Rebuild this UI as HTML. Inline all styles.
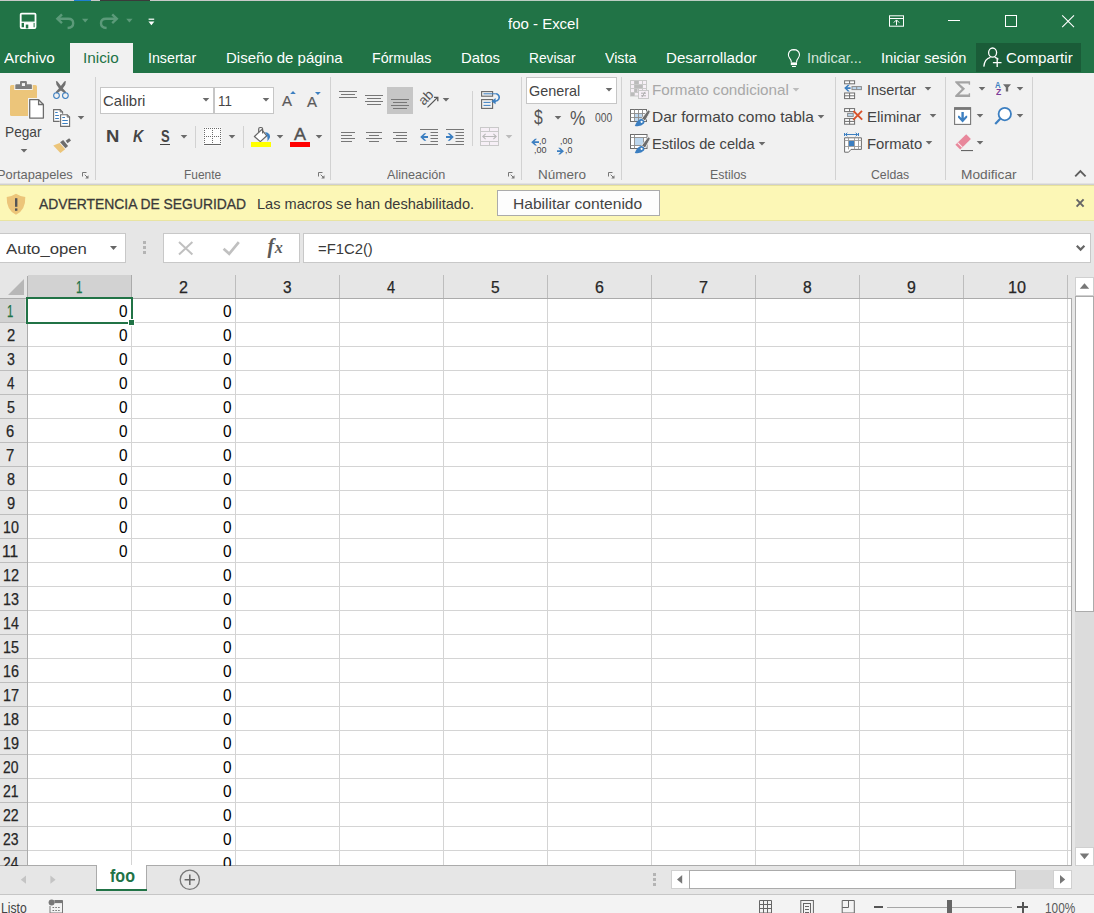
<!DOCTYPE html>
<html lang="es"><head><meta charset="utf-8"><title>foo - Excel</title>
<style>
html,body{margin:0;padding:0}
body{width:1094px;height:913px;position:relative;overflow:hidden;background:#e6e6e6;font-family:"Liberation Sans", sans-serif;}
body>div,body>svg,body>span{position:absolute;display:block}
.t{white-space:pre;line-height:1;transform-origin:0 0;}
</style></head><body>
<div style="left:0px;top:0px;width:1094px;height:1px;background:#bccdc3;"></div>
<div style="left:0px;top:0px;width:300px;height:1px;background:#c9c9c9;"></div>
<div style="left:74px;top:0px;width:17px;height:1px;background:#1e7fd1;"></div>
<div style="left:100px;top:0px;width:50px;height:1px;background:#3a3a3a;"></div>
<div style="left:0px;top:1px;width:1094px;height:72px;background:#217346;"></div>
<div style="left:0px;top:73px;width:1094px;height:110px;background:#f1f1f1;"></div>
<div style="left:0px;top:183px;width:1094px;height:1px;background:#e2e2e2;"></div>
<div style="left:0px;top:184px;width:1094px;height:1px;background:#d0d0d0;"></div>
<div style="left:0px;top:185px;width:1094px;height:36px;background:#fcf7b6;"></div>
<div style="left:0px;top:185px;width:1094px;height:1px;background:#e6e19c;"></div>
<div style="left:0px;top:220px;width:1094px;height:1px;background:#e9e4a2;"></div>
<div style="left:0px;top:221px;width:1094px;height:54px;background:#e6e6e6;"></div>
<span class="t" style="left:508.42px;top:16.30px;font-size:15px;color:#fff;transform:scaleX(0.9986);">foo - Excel</span>
<div style="left:70px;top:43px;width:63px;height:30px;background:#f1f1f1;"></div>
<span class="t" style="left:3.60px;top:50.30px;font-size:15px;color:#fff;transform:scaleX(1.0160);">Archivo</span>
<span class="t" style="left:82.73px;top:50.30px;font-size:15px;color:#217346;transform:scaleX(1.0193);">Inicio</span>
<span class="t" style="left:147.82px;top:50.30px;font-size:15px;color:#fff;transform:scaleX(0.9481);">Insertar</span>
<span class="t" style="left:225.87px;top:50.30px;font-size:15px;color:#fff;transform:scaleX(0.9986);">Diseño de página</span>
<span class="t" style="left:371.93px;top:50.30px;font-size:15px;color:#fff;transform:scaleX(0.9497);">Fórmulas</span>
<span class="t" style="left:461.48px;top:50.30px;font-size:15px;color:#fff;transform:scaleX(0.9913);">Datos</span>
<span class="t" style="left:528.97px;top:50.30px;font-size:15px;color:#fff;transform:scaleX(0.9156);">Revisar</span>
<span class="t" style="left:604.74px;top:50.30px;font-size:15px;color:#fff;transform:scaleX(0.9469);">Vista</span>
<span class="t" style="left:666.26px;top:50.30px;font-size:15px;color:#fff;transform:scaleX(1.0095);">Desarrollador</span>
<span class="t" style="left:806.80px;top:50.30px;font-size:15px;color:#d3e5da;transform:scaleX(0.9668);">Indicar...</span>
<span class="t" style="left:880.78px;top:50.30px;font-size:15px;color:#fff;transform:scaleX(0.9762);">Iniciar sesión</span>
<div style="left:976px;top:43px;width:105px;height:29px;background:#1a5c38;"></div>
<span class="t" style="left:1006.33px;top:50.30px;font-size:15px;color:#fff;transform:scaleX(1.0134);">Compartir</span>
<svg style="left:8px;top:79px" width="40" height="42" viewBox="8 79 40 42"><rect x="10" y="85" width="27" height="31" rx="1.5" fill="#ecc57a"/><path d="M14.3 90.1V84.2H19.4V80.3H27.5V84.2H32.7V90.1Z" fill="#f4f4f4"/><path d="M15.3 88.9V85.2Q15.3 84.2 16.3 84.2H20V82Q20 81 21 81H25.9Q26.9 81 26.9 82V84.2H30.9Q31.9 84.2 31.9 85.2V88.9Z" fill="#7d7d7d"/><rect x="21.9" y="83.1" width="3.1" height="2.9" fill="#f4f4f4"/><path d="M28 98H39.2L45.1 103.9V119.8H28Z" fill="#f4f4f4"/><path d="M29.7 99.7H38.6L43.4 104.5V118.1H29.7Z" fill="#fff" stroke="#6d6d6d" stroke-width="1.3" stroke-linejoin="round"/><path d="M38.6 99.7V104.5H43.4" fill="none" stroke="#6d6d6d" stroke-width="1.3"/></svg>
<span class="t" style="left:5.28px;top:124.00px;font-size:15px;color:#444444;transform:scaleX(0.9132);">Pegar</span>
<svg style="left:20px;top:148px" width="9" height="6" viewBox="20 148 9 6"><path d="M20.7 149H27.3L24 152.4Z" fill="#6a6a6a"/></svg>
<svg style="left:51px;top:79px" width="21" height="22" viewBox="51 79 21 22"><polygon points="55.9,81.0 57.5,81.6 61.9,87.2 66.3,92.3 65.0,93.4 59.9,89.8 56.5,84.8" fill="#707070"/><polygon points="65.9,81.0 64.3,81.6 59.9,87.2 55.5,92.3 56.8,93.4 61.9,89.8 65.3,84.8" fill="#707070"/><circle cx="56.5" cy="95.6" r="2.85" fill="none" stroke="#3c7fc1" stroke-width="1.05"/><circle cx="65.4" cy="95.6" r="2.85" fill="none" stroke="#3c7fc1" stroke-width="1.05"/></svg>
<svg style="left:51px;top:107px" width="21" height="22" viewBox="51 107 21 22"><path d="M53.6 109.6H60.2L62.6 112V121.4H53.6Z" fill="#fff" stroke="#6d6d6d" stroke-width="1.1"/><path d="M60.2 109.6V112H62.6" fill="none" stroke="#6d6d6d" stroke-width="1"/><path d="M55.2 112.5H57.7M55.2 115.5H58.9M55.2 118.5H58.9" stroke="#3c7fc1" stroke-width="1"/><path d="M59.6 113.7H67.6L70.6 116.7V127.3H59.6Z" fill="#f1f1f1"/><path d="M60.6 114.7H67.2L69.6 117.1V126.4H60.6Z" fill="#fff" stroke="#6d6d6d" stroke-width="1.1"/><path d="M67.2 114.7V117.1H69.6" fill="none" stroke="#6d6d6d" stroke-width="1"/><path d="M62.3 117.5H65M62.3 120.5H67.8M62.3 123.5H67.8" stroke="#3c7fc1" stroke-width="1"/></svg>
<svg style="left:77px;top:115px" width="9" height="6" viewBox="77 115 9 6"><path d="M77.7 116H84.3L81 119.4Z" fill="#6a6a6a"/></svg>
<svg style="left:51px;top:136px" width="22" height="20" viewBox="51 136 22 20"><path d="M53.3 145.5L59.6 143.1L65.2 149.2L60.4 153.1Z" fill="#ecc57a"/><path d="M60.1 142.2L63.2 139.9L68.1 145.9L65.5 148.2Z" fill="#6d6d6d"/><path d="M65.7 140.7L69.2 138.2L71 140.4L67.6 143.2Z" fill="#6d6d6d"/></svg>
<span class="t" style="left:-2.95px;top:167.80px;font-size:13px;color:#666666;transform:scaleX(0.9882);">Portapapeles</span>
<svg style="left:81px;top:170.5px" width="9" height="9" viewBox="81 170.5 9 9"><path d="M82.5 176.0V172.0H86.5" fill="none" stroke="#777" stroke-width="1"/><path d="M84.7 174.2L88 177.5" stroke="#777" stroke-width="1"/><path d="M88.5 174.7V178.0H85.2Z" fill="#777"/></svg>
<div style="left:95px;top:77px;width:1px;height:103px;background:#d2d2d2;"></div>
<div style="left:100px;top:87px;width:114px;height:27px;background:#fff;box-sizing:border-box;border:1px solid #c6c6c6"></div>
<div style="left:214px;top:87px;width:60px;height:27px;background:#fff;box-sizing:border-box;border:1px solid #c6c6c6"></div>
<span class="t" style="left:103.34px;top:93.00px;font-size:15px;color:#444444;transform:scaleX(0.9985);">Calibri</span>
<svg style="left:202px;top:97px" width="9" height="6" viewBox="202 97 9 6"><path d="M202.7 98H209.3L206 101.4Z" fill="#6a6a6a"/></svg>
<span class="t" style="left:218.11px;top:93.00px;font-size:15px;color:#444444;transform:scaleX(0.8884);">11</span>
<svg style="left:262px;top:97px" width="9" height="6" viewBox="262 97 9 6"><path d="M262.7 98H269.3L266 101.4Z" fill="#6a6a6a"/></svg>
<span class="t" style="left:282.30px;top:93.20px;font-size:15px;color:#5a5a5a;transform:scaleX(0.9981);-webkit-text-stroke:0.2px currentColor;">A</span>
<svg style="left:289px;top:90px" width="8" height="5" viewBox="289 90 8 5"><path d="M290.2 94H295.8L293 91Z" fill="#3c7fc1"/></svg>
<span class="t" style="left:307.00px;top:94.51px;font-size:14.4px;color:#5a5a5a;transform:scaleX(1.0396);-webkit-text-stroke:0.2px currentColor;">A</span>
<svg style="left:314px;top:91px" width="8" height="5" viewBox="314 91 8 5"><path d="M315 92H320.8L317.9 95Z" fill="#3c7fc1"/></svg>
<span class="t" style="left:105.97px;top:128.95px;font-size:16.6px;color:#444444;transform:scaleX(1.1132);font-weight:700;">N</span>
<span class="t" style="left:133.38px;top:128.95px;font-size:16.6px;color:#444444;transform:scaleX(0.8611);font-weight:700;font-style:italic;">K</span>
<span class="t" style="left:160.85px;top:128.32px;font-size:16.4px;color:#444444;transform:scaleX(0.7906);font-weight:700;">S</span>
<div style="left:160px;top:144px;width:10px;height:1px;background:#444444;"></div>
<svg style="left:180px;top:134px" width="9" height="6" viewBox="180 134 9 6"><path d="M180.7 135H187.3L184 138.4Z" fill="#6a6a6a"/></svg>
<div style="left:195px;top:126px;width:1px;height:22px;background:#d2d2d2;"></div>
<svg style="left:203px;top:127px" width="19" height="19" viewBox="203 127 19 19"><rect x="203.5" y="127.5" width="18" height="18" fill="#fdfdfd"/><rect x="204" y="128" width="1" height="1" fill="#6a6a6a"/><rect x="204" y="136" width="1" height="1" fill="#6a6a6a"/><rect x="206" y="128" width="1" height="1" fill="#6a6a6a"/><rect x="206" y="136" width="1" height="1" fill="#6a6a6a"/><rect x="208" y="128" width="1" height="1" fill="#6a6a6a"/><rect x="208" y="136" width="1" height="1" fill="#6a6a6a"/><rect x="210" y="128" width="1" height="1" fill="#6a6a6a"/><rect x="210" y="136" width="1" height="1" fill="#6a6a6a"/><rect x="212" y="128" width="1" height="1" fill="#6a6a6a"/><rect x="212" y="136" width="1" height="1" fill="#6a6a6a"/><rect x="214" y="128" width="1" height="1" fill="#6a6a6a"/><rect x="214" y="136" width="1" height="1" fill="#6a6a6a"/><rect x="216" y="128" width="1" height="1" fill="#6a6a6a"/><rect x="216" y="136" width="1" height="1" fill="#6a6a6a"/><rect x="218" y="128" width="1" height="1" fill="#6a6a6a"/><rect x="218" y="136" width="1" height="1" fill="#6a6a6a"/><rect x="220" y="128" width="1" height="1" fill="#6a6a6a"/><rect x="220" y="136" width="1" height="1" fill="#6a6a6a"/><rect x="204" y="130" width="1" height="1" fill="#6a6a6a"/><rect x="212" y="130" width="1" height="1" fill="#6a6a6a"/><rect x="220" y="130" width="1" height="1" fill="#6a6a6a"/><rect x="204" y="132" width="1" height="1" fill="#6a6a6a"/><rect x="212" y="132" width="1" height="1" fill="#6a6a6a"/><rect x="220" y="132" width="1" height="1" fill="#6a6a6a"/><rect x="204" y="134" width="1" height="1" fill="#6a6a6a"/><rect x="212" y="134" width="1" height="1" fill="#6a6a6a"/><rect x="220" y="134" width="1" height="1" fill="#6a6a6a"/><rect x="204" y="138" width="1" height="1" fill="#6a6a6a"/><rect x="212" y="138" width="1" height="1" fill="#6a6a6a"/><rect x="220" y="138" width="1" height="1" fill="#6a6a6a"/><rect x="204" y="140" width="1" height="1" fill="#6a6a6a"/><rect x="212" y="140" width="1" height="1" fill="#6a6a6a"/><rect x="220" y="140" width="1" height="1" fill="#6a6a6a"/><rect x="204" y="142" width="1" height="1" fill="#6a6a6a"/><rect x="212" y="142" width="1" height="1" fill="#6a6a6a"/><rect x="220" y="142" width="1" height="1" fill="#6a6a6a"/><rect x="204" y="144" width="17" height="1" fill="#666"/></svg>
<svg style="left:228px;top:134px" width="9" height="6" viewBox="228 134 9 6"><path d="M228.7 135H235.3L232 138.4Z" fill="#6a6a6a"/></svg>
<div style="left:243px;top:126px;width:1px;height:22px;background:#d2d2d2;"></div>
<svg style="left:250px;top:125px" width="22" height="23" viewBox="250 125 22 23"><path d="M254.4 136.5L261.7 129.6L266.8 135.8L260.3 141.6Z" fill="#fff" stroke="#666" stroke-width="1.2" stroke-linejoin="round"/><path d="M258.7 132.2V128.9Q258.7 127.5 260.1 127.5H261.2Q262.6 127.5 262.6 128.9V133.6" fill="none" stroke="#666" stroke-width="1.2"/><path d="M264.9 132.1Q268.2 132.4 269.6 134.4Q270.6 136.6 269.3 138.8Q268.4 140.2 267.5 141.4Q267.6 138.6 267.3 136.6Q266.8 134.6 264.9 132.1Z" fill="#3c7fc1"/><rect x="251" y="142" width="20" height="5" fill="#ffff00"/></svg>
<svg style="left:276px;top:134px" width="9" height="6" viewBox="276 134 9 6"><path d="M276.7 135H283.3L280 138.4Z" fill="#6a6a6a"/></svg>
<span class="t" style="left:293.80px;top:126.21px;font-size:17px;color:#505050;transform:scaleX(1.0568);-webkit-text-stroke:0.4px currentColor;">A</span>
<div style="left:290px;top:142px;width:20px;height:5px;background:#ff0000;"></div>
<svg style="left:315px;top:134px" width="9" height="6" viewBox="315 134 9 6"><path d="M315.7 135H322.3L319 138.4Z" fill="#6a6a6a"/></svg>
<span class="t" style="left:184.12px;top:167.80px;font-size:13px;color:#666666;transform:scaleX(0.9194);">Fuente</span>
<svg style="left:316.5px;top:170.5px" width="9" height="9" viewBox="316.5 170.5 9 9"><path d="M318.0 176.0V172.0H322.0" fill="none" stroke="#777" stroke-width="1"/><path d="M320.2 174.2L323.5 177.5" stroke="#777" stroke-width="1"/><path d="M324.0 174.7V178.0H320.7Z" fill="#777"/></svg>
<div style="left:330px;top:77px;width:1px;height:103px;background:#d2d2d2;"></div>
<svg style="left:338px;top:89px" width="20" height="11" viewBox="338 89 20 11"><rect x="339" y="91" width="18" height="1" fill="#777"/><rect x="341" y="94" width="14" height="1" fill="#777"/><rect x="339" y="97" width="18" height="1" fill="#777"/></svg>
<svg style="left:364px;top:93px" width="20" height="13" viewBox="364 93 20 13"><rect x="365" y="95" width="18" height="1" fill="#777"/><rect x="367" y="98" width="14" height="1" fill="#777"/><rect x="365" y="101" width="18" height="1" fill="#777"/><rect x="367" y="104" width="14" height="1" fill="#777"/></svg>
<div style="left:387px;top:87px;width:26px;height:27px;background:#c6c6c6;"></div>
<svg style="left:389px;top:97px" width="22" height="13" viewBox="389 97 22 13"><rect x="391" y="99" width="18" height="1" fill="#777"/><rect x="393" y="102" width="14" height="1" fill="#777"/><rect x="391" y="105" width="18" height="1" fill="#777"/><rect x="393" y="108" width="14" height="1" fill="#777"/></svg>
<span class="t" style="left:418.2px;top:91.4px;width:16px;text-align:center;font-size:13.5px;color:#555;transform-origin:50% 50%;transform:rotate(-45deg)">ab</span>
<svg style="left:424px;top:94px" width="17" height="16" viewBox="424 94 17 16"><path d="M427.5 107.4L437.4 97.6" stroke="#555" stroke-width="1.3" fill="none"/><path d="M434 97.4H437.8V101.2" stroke="#555" stroke-width="1.3" fill="none"/></svg>
<svg style="left:442px;top:97px" width="9" height="6" viewBox="442 97 9 6"><path d="M442.7 98H449.3L446 101.4Z" fill="#6a6a6a"/></svg>
<div style="left:472px;top:91px;width:1px;height:55px;background:#d2d2d2;"></div>
<svg style="left:479px;top:89px" width="24" height="22" viewBox="479 89 24 22"><rect x="481.6" y="91.6" width="11" height="4.6" fill="none" stroke="#666" stroke-width="1.1"/><rect x="481.6" y="99.6" width="11" height="8.8" fill="none" stroke="#666" stroke-width="1.1"/><path d="M483.5 93.8H497M483.5 102.4H490.5M483.5 105.4H490.5" stroke="#3c7fc1" stroke-width="1"/><path d="M496.5 93.6Q500.3 95.5 498.8 99.2Q497.4 101.6 494.4 101.2" fill="none" stroke="#3c7fc1" stroke-width="1.6"/><path d="M491.4 101.2L495.6 98V104.2Z" fill="#3c7fc1"/></svg>
<svg style="left:340px;top:130px" width="17" height="14" viewBox="340 130 17 14"><rect x="341" y="132" width="14" height="1" fill="#777"/><rect x="341" y="135" width="11" height="1" fill="#777"/><rect x="341" y="138" width="14" height="1" fill="#777"/><rect x="341" y="141" width="11" height="1" fill="#777"/></svg>
<svg style="left:365px;top:130px" width="18" height="14" viewBox="365 130 18 14"><rect x="366" y="132" width="16" height="1" fill="#777"/><rect x="369" y="135" width="10" height="1" fill="#777"/><rect x="366" y="138" width="16" height="1" fill="#777"/><rect x="369" y="141" width="10" height="1" fill="#777"/></svg>
<svg style="left:392px;top:130px" width="16" height="14" viewBox="392 130 16 14"><rect x="393" y="132" width="14" height="1" fill="#777"/><rect x="396" y="135" width="11" height="1" fill="#777"/><rect x="393" y="138" width="14" height="1" fill="#777"/><rect x="396" y="141" width="11" height="1" fill="#777"/></svg>
<svg style="left:419px;top:127px" width="20" height="19" viewBox="419 127 20 19"><rect x="420" y="129" width="18" height="1" fill="#777"/><rect x="420" y="144" width="18" height="1" fill="#777"/><rect x="430.5" y="132" width="7.5" height="1" fill="#777"/><rect x="430.5" y="135" width="7.5" height="1" fill="#777"/><rect x="430.5" y="138" width="7.5" height="1" fill="#777"/><rect x="430.5" y="141" width="7.5" height="1" fill="#777"/><path d="M420.2 137L424.2 133.2H426.4L423.6 136H428V138H423.6L426.4 140.8H424.2Z" fill="#3c7fc1"/></svg>
<svg style="left:445px;top:127px" width="20" height="19" viewBox="445 127 20 19"><rect x="446" y="129" width="18" height="1" fill="#777"/><rect x="446" y="144" width="18" height="1" fill="#777"/><rect x="455.5" y="132" width="8.5" height="1" fill="#777"/><rect x="455.5" y="135" width="8.5" height="1" fill="#777"/><rect x="455.5" y="138" width="8.5" height="1" fill="#777"/><rect x="455.5" y="141" width="8.5" height="1" fill="#777"/><path d="M453.8 137L449.8 133.2H447.6L450.4 136H446V138H450.4L447.6 140.8H449.8Z" fill="#3c7fc1"/></svg>
<svg style="left:479px;top:126px" width="21" height="21" viewBox="479 126 21 21"><rect x="480.5" y="127.5" width="18" height="18" fill="#f6eff6" stroke="#c9c9c9"/><path d="M480.5 131.5H498.5M480.5 141.5H498.5M489.5 127.5V131.5M489.5 141.5V145.5" stroke="#c9c9c9" fill="none"/><path d="M483 136.5H496M485.6 133.8L482.8 136.5L485.6 139.2M493.4 133.8L496.2 136.5L493.4 139.2" stroke="#b9b9b9" stroke-width="1.1" fill="none"/></svg>
<svg style="left:505px;top:134px" width="9" height="6" viewBox="505 134 9 6"><path d="M505.7 135H512.3L509 138.4Z" fill="#bcbcbc"/></svg>
<span class="t" style="left:387.40px;top:167.80px;font-size:13px;color:#666666;transform:scaleX(0.9704);">Alineación</span>
<svg style="left:507px;top:170.5px" width="9" height="9" viewBox="507 170.5 9 9"><path d="M508.5 176.0V172.0H512.5" fill="none" stroke="#777" stroke-width="1"/><path d="M510.7 174.2L514 177.5" stroke="#777" stroke-width="1"/><path d="M514.5 174.7V178.0H511.2Z" fill="#777"/></svg>
<div style="left:521px;top:77px;width:1px;height:103px;background:#d2d2d2;"></div>
<div style="left:526px;top:77px;width:91px;height:27px;background:#fff;box-sizing:border-box;border:1px solid #c6c6c6"></div>
<span class="t" style="left:528.73px;top:83.30px;font-size:15px;color:#444444;transform:scaleX(0.9599);">General</span>
<svg style="left:605px;top:87px" width="9" height="6" viewBox="605 87 9 6"><path d="M605.7 88H612.3L609 91.4Z" fill="#6a6a6a"/></svg>
<span class="t" style="left:534.48px;top:107.47px;font-size:20px;color:#555;transform:scaleX(0.7848);">$</span>
<svg style="left:554px;top:115px" width="9" height="6" viewBox="554 115 9 6"><path d="M554.7 116H561.3L558 119.4Z" fill="#6a6a6a"/></svg>
<span class="t" style="left:570.30px;top:108.69px;font-size:19.5px;color:#555;transform:scaleX(0.8815);">%</span>
<span class="t" style="left:594.90px;top:112.34px;font-size:12px;color:#555;transform:scaleX(0.8633);">000</span>
<svg style="left:530px;top:137px" width="18" height="19" viewBox="530 137 18 19"><path d="M531.2 142.2L535 138.8H537L534.5 141.3H539V143.1H534.5L537 145.6H535Z" fill="#3c7fc1"/></svg>
<span class="t" style="left:539.13px;top:136.53px;font-size:9.3px;color:#444;transform:scaleX(0.9271);">,0</span>
<span class="t" style="left:533.79px;top:145.93px;font-size:9.3px;color:#444;transform:scaleX(0.9700);">,00</span>
<span class="t" style="left:559.80px;top:136.53px;font-size:9.3px;color:#444;transform:scaleX(0.9530);">,00</span>
<svg style="left:556px;top:146px" width="10" height="10" viewBox="556 146 10 10"><path d="M564 151.2L560.2 147.8H558.2L560.7 150.3H557V152.1H560.7L558.2 154.6H560.2Z" fill="#3c7fc1"/></svg>
<span class="t" style="left:564.81px;top:145.93px;font-size:9.3px;color:#444;transform:scaleX(0.9423);">,0</span>
<span class="t" style="left:537.79px;top:167.80px;font-size:13px;color:#666666;transform:scaleX(1.0394);">Número</span>
<svg style="left:607px;top:170.5px" width="9" height="9" viewBox="607 170.5 9 9"><path d="M608.5 176.0V172.0H612.5" fill="none" stroke="#777" stroke-width="1"/><path d="M610.7 174.2L614 177.5" stroke="#777" stroke-width="1"/><path d="M614.5 174.7V178.0H611.2Z" fill="#777"/></svg>
<div style="left:621px;top:77px;width:1px;height:103px;background:#d2d2d2;"></div>
<svg style="left:629px;top:79px" width="21" height="21" viewBox="629 79 21 21"><rect x="630.5" y="80.5" width="16" height="15.5" fill="#f6eff6" stroke="#c9c9c9"/><path d="M634.5 80.5V96M638.5 80.5V90M642.5 80.5V90M630.5 84.5H646.5M630.5 88.5H646.5M630.5 92.5H638" stroke="#c9c9c9" fill="none"/><rect x="634.5" y="81" width="4" height="3" fill="#bbb"/><rect x="634.5" y="85" width="8" height="3" fill="#bbb"/><rect x="634.5" y="89" width="3" height="3" fill="#bbb"/><rect x="631" y="93" width="3" height="3" fill="#bbb"/><rect x="638.5" y="90.5" width="10" height="8" fill="#f6eff6" stroke="#c9c9c9"/><path d="M641 93.2H646M641 95.8H646M645 91.8L642 97.2" stroke="#aaa" stroke-width=".9" fill="none"/></svg>
<span class="t" style="left:652.15px;top:81.80px;font-size:15px;color:#a8a8a8;transform:scaleX(1.0132);">Formato condicional</span>
<svg style="left:792px;top:87px" width="9" height="6" viewBox="792 87 9 6"><path d="M792.7 88H799.3L796 91.4Z" fill="#bcbcbc"/></svg>
<svg style="left:629px;top:108px" width="22" height="19" viewBox="629 108 22 19"><rect x="630.5" y="109.5" width="16" height="12" fill="#fff" stroke="#6d6d6d"/><rect x="635" y="114" width="7.5" height="7" fill="#bdd7ee"/><path d="M634.5 109.5V121.5M638.5 109.5V121.5M642.5 109.5V121.5M630.5 113.5H646.5M630.5 117.5H646.5" stroke="#8a8a8a" stroke-width=".9" fill="none"/><path d="M650.4 111.6L645.2 121L641.6 118.6L648.2 109.8Z" fill="#6d6d6d" stroke="#f1f1f1" stroke-width=".9"/><path d="M634.8 126Q636.6 120.4 641.4 118.8Q645.6 120.6 644 123.6Q641 127 634.8 126Z" fill="#3c7fc1"/><circle cx="641.6" cy="121.8" r="1.1" fill="#fff"/></svg>
<span class="t" style="left:652.33px;top:108.90px;font-size:15px;color:#444444;transform:scaleX(1.0326);">Dar formato como tabla</span>
<svg style="left:817px;top:114px" width="9" height="6" viewBox="817 114 9 6"><path d="M817.7 115H824.3L821 118.4Z" fill="#6a6a6a"/></svg>
<svg style="left:629px;top:133px" width="22" height="21" viewBox="629 133 22 21"><rect x="630.5" y="134.5" width="16.5" height="14" fill="#fff" stroke="#6d6d6d"/><rect x="635" y="138" width="8" height="7" fill="#bdd7ee"/><path d="M634.5 134.5V148.5M630.5 137.5H647M630.5 145.5H647M643.5 137.5V148.5" stroke="#8a8a8a" stroke-width=".9" fill="none"/><path d="M650.4 138.6L645.2 148L641.6 145.6L648.2 136.8Z" fill="#6d6d6d" stroke="#f1f1f1" stroke-width=".9"/><path d="M634.8 153Q636.6 147.4 641.4 145.8Q645.6 147.6 644 150.6Q641 154 634.8 153Z" fill="#3c7fc1"/><circle cx="641.6" cy="148.8" r="1.1" fill="#fff"/></svg>
<span class="t" style="left:652.40px;top:136.00px;font-size:15px;color:#444444;transform:scaleX(0.9763);">Estilos de celda</span>
<svg style="left:758px;top:141px" width="9" height="6" viewBox="758 141 9 6"><path d="M758.7 142H765.3L762 145.4Z" fill="#6a6a6a"/></svg>
<span class="t" style="left:710.08px;top:167.80px;font-size:13px;color:#666666;transform:scaleX(0.9520);">Estilos</span>
<div style="left:835px;top:77px;width:1px;height:103px;background:#d2d2d2;"></div>
<svg style="left:843px;top:79px" width="20" height="21" viewBox="843 79 20 21"><rect x="844.6" y="80.8" width="10" height="3" fill="#fff" stroke="#6d6d6d"/><path d="M849.6 80.8V83.8" stroke="#6d6d6d"/><rect x="852" y="86.6" width="9.4" height="3" fill="#bdd7ee" stroke="#8a8a8a"/><path d="M856.7 86.6V89.6" stroke="#8a8a8a"/><path d="M844.2 88.1L847.8 84.8H849.8L847.3 87.2H850.6V89H847.3L849.8 91.4H847.8Z" fill="#3c7fc1"/><rect x="844.6" y="93" width="10" height="5.6" fill="#fff" stroke="#6d6d6d"/><path d="M849.6 93V98.6M844.6 95.8H854.6" stroke="#6d6d6d"/></svg>
<span class="t" style="left:866.80px;top:81.80px;font-size:15px;color:#444444;transform:scaleX(0.9644);">Insertar</span>
<svg style="left:924px;top:86px" width="9" height="6" viewBox="924 86 9 6"><path d="M924.7 87H931.3L928 90.4Z" fill="#6a6a6a"/></svg>
<svg style="left:843px;top:107px" width="21" height="19" viewBox="843 107 21 19"><rect x="844.6" y="108.6" width="10" height="3" fill="#fff" stroke="#6d6d6d"/><path d="M849.6 108.6V111.6" stroke="#6d6d6d"/><rect x="847.6" y="113.4" width="5.6" height="3" fill="#bdd7ee" stroke="#8a8a8a"/><rect x="844.6" y="118.6" width="10" height="5.6" fill="#fff" stroke="#6d6d6d"/><path d="M849.6 118.6V124.2M844.6 121.4H854.6" stroke="#6d6d6d"/><path d="M853.4 111L862.2 119.6M862 110.8L853.2 119.8" stroke="#d9532c" stroke-width="1.9" fill="none"/></svg>
<span class="t" style="left:866.67px;top:108.90px;font-size:15px;color:#444444;transform:scaleX(0.9981);">Eliminar</span>
<svg style="left:929px;top:113px" width="9" height="6" viewBox="929 113 9 6"><path d="M929.7 114H936.3L933 117.4Z" fill="#6a6a6a"/></svg>
<svg style="left:843px;top:132px" width="20" height="22" viewBox="843 132 20 22"><path d="M844.5 133V136M858.5 133V136M845.5 134.5H857.5M847.3 132.8L845.4 134.5L847.3 136.2M855.7 132.8L857.6 134.5L855.7 136.2" stroke="#3c7fc1" stroke-width="1" fill="none"/><path d="M844.6 137.8H861.4V149.4H851L848.6 152.2H844.6Z" fill="#fff" stroke="#6d6d6d"/><path d="M848.5 137.8V149.4M854.5 137.8V149.4M858.5 137.8V149.4M844.6 140.5H861.4M844.6 146.5H861.4" stroke="#9a9a9a" stroke-width=".9" fill="none"/><rect x="849" y="141" width="5" height="5" fill="#3c7fc1"/></svg>
<span class="t" style="left:866.88px;top:136.00px;font-size:15px;color:#444444;transform:scaleX(0.9887);">Formato</span>
<svg style="left:925px;top:140px" width="9" height="6" viewBox="925 140 9 6"><path d="M925.7 141H932.3L929 144.4Z" fill="#6a6a6a"/></svg>
<span class="t" style="left:871.48px;top:167.80px;font-size:13px;color:#666666;transform:scaleX(0.9428);">Celdas</span>
<div style="left:945px;top:77px;width:1px;height:103px;background:#d2d2d2;"></div>
<svg style="left:954px;top:80px" width="18" height="19" viewBox="954 80 18 19"><path d="M955.2 81.2H970.1V84.8H968.7V83.4H959.2L965.1 88.8L959.2 94.6H968.7V93.2H970.1V96.9H955.2V95.5L961.8 89L955.2 82.5Z" fill="#a3a3a3"/></svg>
<svg style="left:978px;top:86px" width="9" height="6" viewBox="978 86 9 6"><path d="M978.7 87H985.3L982 90.4Z" fill="#6a6a6a"/></svg>
<span class="t" style="left:995.42px;top:79.86px;font-size:9.5px;color:#3c7fc1;transform:scaleX(0.8100);font-weight:700;">A</span>
<span class="t" style="left:995.56px;top:88.38px;font-size:9px;color:#7d3c98;transform:scaleX(0.9615);font-weight:700;">Z</span>
<svg style="left:1002px;top:83px" width="10" height="10" viewBox="1002 83 10 10"><path d="M1003 84.2H1011L1008.2 87.6V91.6H1005.8V87.6Z" fill="#6d6d6d"/></svg>
<svg style="left:1016px;top:86px" width="9" height="6" viewBox="1016 86 9 6"><path d="M1016.7 87H1023.3L1020 90.4Z" fill="#6a6a6a"/></svg>
<svg style="left:953px;top:106px" width="19" height="20" viewBox="953 106 19 20"><rect x="954.6" y="107.8" width="16" height="16.6" fill="#fff" stroke="#777" stroke-width="1.1"/><rect x="954.2" y="107.3" width="16.8" height="2.6" fill="#777"/><path d="M961.4 112H963.8V118L966 115.8H967.2V117.4L962.6 122.6L958 117.4V115.8H959.2L961.4 118Z" fill="#3c7fc1"/></svg>
<svg style="left:976px;top:113px" width="9" height="6" viewBox="976 113 9 6"><path d="M976.7 114H983.3L980 117.4Z" fill="#6a6a6a"/></svg>
<svg style="left:993px;top:106px" width="21" height="20" viewBox="993 106 21 20"><circle cx="1004.8" cy="114.1" r="6.2" fill="#fff" stroke="#3c7fc1" stroke-width="1.8"/><path d="M1000.2 118.8L995.2 124" stroke="#3c7fc1" stroke-width="2.2" fill="none"/></svg>
<svg style="left:1016px;top:113px" width="9" height="6" viewBox="1016 113 9 6"><path d="M1016.7 114H1023.3L1020 117.4Z" fill="#6a6a6a"/></svg>
<svg style="left:954px;top:132px" width="21" height="21" viewBox="954 132 21 21"><path d="M966.2 134.2L970.9 138.9L960.2 149.6L955.4 144.8Z" fill="#e8879b"/><path d="M957.6 142.6L962.4 147.4" stroke="#fbe9ed" stroke-width="1.2"/><rect x="961" y="150" width="12" height="1.1" fill="#666"/></svg>
<svg style="left:976px;top:140px" width="9" height="6" viewBox="976 140 9 6"><path d="M976.7 141H983.3L980 144.4Z" fill="#6a6a6a"/></svg>
<span class="t" style="left:960.88px;top:167.80px;font-size:13px;color:#666666;transform:scaleX(1.0534);">Modificar</span>
<div style="left:1032px;top:77px;width:1px;height:103px;background:#d2d2d2;"></div>
<svg style="left:1073px;top:168px" width="15" height="11" viewBox="1073 168 15 11"><path d="M1075.2 176.4L1080.4 171.2L1085.6 176.4" fill="none" stroke="#5e5e5e" stroke-width="1.9"/></svg>
<span class="t" style="left:39.30px;top:196.32px;font-size:15.1px;color:#3a3a3a;transform:scaleX(0.9190);-webkit-text-stroke:0.3px currentColor;">ADVERTENCIA DE SEGURIDAD</span>
<span class="t" style="left:256.90px;top:196.30px;font-size:15px;color:#3a3a3a;transform:scaleX(0.9716);">Las macros se han deshabilitado.</span>
<div style="left:497px;top:190px;width:163px;height:26px;background:#fdfdfd;box-sizing:border-box;border:1px solid #ababab"></div>
<span class="t" style="left:512.82px;top:196.30px;font-size:15px;color:#444;transform:scaleX(1.0400);">Habilitar contenido</span>
<div style="left:-1px;top:233px;width:127px;height:30px;background:#fff;box-sizing:border-box;border:1px solid #c8c8c8"></div>
<span class="t" style="left:6.20px;top:241.33px;font-size:15.2px;color:#3a3a3a;transform:scaleX(1.1011);">Auto_open</span>
<svg style="left:110px;top:246px;" width="7" height="4" viewBox="0 0 7 4"><path d="M0 0H7L3.5 4Z" fill="#666"/></svg>
<div style="left:163px;top:233px;width:137px;height:30px;background:#fff;box-sizing:border-box;border:1px solid #c8c8c8"></div>
<div style="left:303px;top:233px;width:788px;height:30px;background:#fff;box-sizing:border-box;border:1px solid #c8c8c8"></div>
<span class="t" style="left:317.51px;top:241.25px;font-size:15.3px;color:#3a3a3a;transform:scaleX(0.9689);">=F1C2()</span>
<div style="left:0px;top:275px;width:1072px;height:23px;background:#e6e6e6;"></div>
<div style="left:28px;top:275px;width:103px;height:22px;background:#d2d2d2;"></div>
<div style="left:0px;top:298px;width:1072px;height:567px;background:#fff;"></div>
<div style="left:0px;top:298px;width:27px;height:567px;background:#e6e6e6;"></div>
<div style="left:0px;top:299px;width:25px;height:23px;background:#d2d2d2;"></div>
<div style="left:131px;top:299px;width:1px;height:566px;background:#d4d4d4;"></div>
<div style="left:131px;top:275px;width:1px;height:23px;background:#ababab;"></div>
<div style="left:235px;top:299px;width:1px;height:566px;background:#d4d4d4;"></div>
<div style="left:235px;top:275px;width:1px;height:23px;background:#bdbdbd;"></div>
<div style="left:339px;top:299px;width:1px;height:566px;background:#d4d4d4;"></div>
<div style="left:339px;top:275px;width:1px;height:23px;background:#bdbdbd;"></div>
<div style="left:443px;top:299px;width:1px;height:566px;background:#d4d4d4;"></div>
<div style="left:443px;top:275px;width:1px;height:23px;background:#bdbdbd;"></div>
<div style="left:547px;top:299px;width:1px;height:566px;background:#d4d4d4;"></div>
<div style="left:547px;top:275px;width:1px;height:23px;background:#bdbdbd;"></div>
<div style="left:651px;top:299px;width:1px;height:566px;background:#d4d4d4;"></div>
<div style="left:651px;top:275px;width:1px;height:23px;background:#bdbdbd;"></div>
<div style="left:755px;top:299px;width:1px;height:566px;background:#d4d4d4;"></div>
<div style="left:755px;top:275px;width:1px;height:23px;background:#bdbdbd;"></div>
<div style="left:859px;top:299px;width:1px;height:566px;background:#d4d4d4;"></div>
<div style="left:859px;top:275px;width:1px;height:23px;background:#bdbdbd;"></div>
<div style="left:963px;top:299px;width:1px;height:566px;background:#d4d4d4;"></div>
<div style="left:963px;top:275px;width:1px;height:23px;background:#bdbdbd;"></div>
<div style="left:1067px;top:299px;width:1px;height:566px;background:#d4d4d4;"></div>
<div style="left:1067px;top:275px;width:1px;height:23px;background:#bdbdbd;"></div>
<div style="left:28px;top:322px;width:1043px;height:1px;background:#d4d4d4;"></div>
<div style="left:0px;top:322px;width:27px;height:1px;background:#bdbdbd;"></div>
<div style="left:28px;top:346px;width:1043px;height:1px;background:#d4d4d4;"></div>
<div style="left:0px;top:346px;width:27px;height:1px;background:#bdbdbd;"></div>
<div style="left:28px;top:370px;width:1043px;height:1px;background:#d4d4d4;"></div>
<div style="left:0px;top:370px;width:27px;height:1px;background:#bdbdbd;"></div>
<div style="left:28px;top:394px;width:1043px;height:1px;background:#d4d4d4;"></div>
<div style="left:0px;top:394px;width:27px;height:1px;background:#bdbdbd;"></div>
<div style="left:28px;top:418px;width:1043px;height:1px;background:#d4d4d4;"></div>
<div style="left:0px;top:418px;width:27px;height:1px;background:#bdbdbd;"></div>
<div style="left:28px;top:442px;width:1043px;height:1px;background:#d4d4d4;"></div>
<div style="left:0px;top:442px;width:27px;height:1px;background:#bdbdbd;"></div>
<div style="left:28px;top:466px;width:1043px;height:1px;background:#d4d4d4;"></div>
<div style="left:0px;top:466px;width:27px;height:1px;background:#bdbdbd;"></div>
<div style="left:28px;top:490px;width:1043px;height:1px;background:#d4d4d4;"></div>
<div style="left:0px;top:490px;width:27px;height:1px;background:#bdbdbd;"></div>
<div style="left:28px;top:514px;width:1043px;height:1px;background:#d4d4d4;"></div>
<div style="left:0px;top:514px;width:27px;height:1px;background:#bdbdbd;"></div>
<div style="left:28px;top:538px;width:1043px;height:1px;background:#d4d4d4;"></div>
<div style="left:0px;top:538px;width:27px;height:1px;background:#bdbdbd;"></div>
<div style="left:28px;top:562px;width:1043px;height:1px;background:#d4d4d4;"></div>
<div style="left:0px;top:562px;width:27px;height:1px;background:#bdbdbd;"></div>
<div style="left:28px;top:586px;width:1043px;height:1px;background:#d4d4d4;"></div>
<div style="left:0px;top:586px;width:27px;height:1px;background:#bdbdbd;"></div>
<div style="left:28px;top:610px;width:1043px;height:1px;background:#d4d4d4;"></div>
<div style="left:0px;top:610px;width:27px;height:1px;background:#bdbdbd;"></div>
<div style="left:28px;top:634px;width:1043px;height:1px;background:#d4d4d4;"></div>
<div style="left:0px;top:634px;width:27px;height:1px;background:#bdbdbd;"></div>
<div style="left:28px;top:658px;width:1043px;height:1px;background:#d4d4d4;"></div>
<div style="left:0px;top:658px;width:27px;height:1px;background:#bdbdbd;"></div>
<div style="left:28px;top:682px;width:1043px;height:1px;background:#d4d4d4;"></div>
<div style="left:0px;top:682px;width:27px;height:1px;background:#bdbdbd;"></div>
<div style="left:28px;top:706px;width:1043px;height:1px;background:#d4d4d4;"></div>
<div style="left:0px;top:706px;width:27px;height:1px;background:#bdbdbd;"></div>
<div style="left:28px;top:730px;width:1043px;height:1px;background:#d4d4d4;"></div>
<div style="left:0px;top:730px;width:27px;height:1px;background:#bdbdbd;"></div>
<div style="left:28px;top:754px;width:1043px;height:1px;background:#d4d4d4;"></div>
<div style="left:0px;top:754px;width:27px;height:1px;background:#bdbdbd;"></div>
<div style="left:28px;top:778px;width:1043px;height:1px;background:#d4d4d4;"></div>
<div style="left:0px;top:778px;width:27px;height:1px;background:#bdbdbd;"></div>
<div style="left:28px;top:802px;width:1043px;height:1px;background:#d4d4d4;"></div>
<div style="left:0px;top:802px;width:27px;height:1px;background:#bdbdbd;"></div>
<div style="left:28px;top:826px;width:1043px;height:1px;background:#d4d4d4;"></div>
<div style="left:0px;top:826px;width:27px;height:1px;background:#bdbdbd;"></div>
<div style="left:28px;top:850px;width:1043px;height:1px;background:#d4d4d4;"></div>
<div style="left:0px;top:850px;width:27px;height:1px;background:#bdbdbd;"></div>
<div style="left:27px;top:276px;width:1px;height:589px;background:#ababab;"></div>
<div style="left:0px;top:298px;width:1072px;height:1px;background:#ababab;"></div>
<div style="left:1071px;top:298px;width:1px;height:567px;background:#ababab;"></div>
<div style="left:0px;top:865px;width:1072px;height:1px;background:#ababab;"></div>
<span class="t" style="left:76.34px;top:279.76px;font-size:16px;color:#217346;transform:scaleX(0.7207);-webkit-text-stroke:0.25px currentColor;">1</span>
<span class="t" style="left:178.95px;top:279.76px;font-size:16px;color:#262626;transform:scaleX(1.0034);-webkit-text-stroke:0.25px currentColor;">2</span>
<span class="t" style="left:283.16px;top:279.76px;font-size:16px;color:#262626;transform:scaleX(0.9626);-webkit-text-stroke:0.25px currentColor;">3</span>
<span class="t" style="left:387.42px;top:279.76px;font-size:16px;color:#262626;transform:scaleX(0.9108);-webkit-text-stroke:0.25px currentColor;">4</span>
<span class="t" style="left:491.09px;top:279.76px;font-size:16px;color:#262626;transform:scaleX(0.9705);-webkit-text-stroke:0.25px currentColor;">5</span>
<span class="t" style="left:594.89px;top:279.76px;font-size:16px;color:#262626;transform:scaleX(0.9950);-webkit-text-stroke:0.25px currentColor;">6</span>
<span class="t" style="left:698.88px;top:279.76px;font-size:16px;color:#262626;transform:scaleX(1.0120);-webkit-text-stroke:0.25px currentColor;">7</span>
<span class="t" style="left:803.03px;top:279.76px;font-size:16px;color:#262626;transform:scaleX(0.9785);-webkit-text-stroke:0.25px currentColor;">8</span>
<span class="t" style="left:906.95px;top:279.76px;font-size:16px;color:#262626;transform:scaleX(0.9950);-webkit-text-stroke:0.25px currentColor;">9</span>
<span class="t" style="left:1007.80px;top:279.76px;font-size:16px;color:#262626;transform:scaleX(1.0110);-webkit-text-stroke:0.25px currentColor;">10</span>
<span class="t" style="left:7.36px;top:303.66px;font-size:16px;color:#217346;transform:scaleX(0.7063);-webkit-text-stroke:0.25px currentColor;">1</span>
<span class="t" style="left:119.30px;top:304.01px;font-size:15.7px;color:#000;transform:scaleX(0.9810);">0</span>
<span class="t" style="left:223.30px;top:304.01px;font-size:15.7px;color:#000;transform:scaleX(0.9810);">0</span>
<span class="t" style="left:6.51px;top:327.66px;font-size:16px;color:#262626;transform:scaleX(0.9220);-webkit-text-stroke:0.25px currentColor;">2</span>
<span class="t" style="left:119.30px;top:328.01px;font-size:15.7px;color:#000;transform:scaleX(0.9810);">0</span>
<span class="t" style="left:223.30px;top:328.01px;font-size:15.7px;color:#000;transform:scaleX(0.9810);">0</span>
<span class="t" style="left:6.70px;top:351.66px;font-size:16px;color:#262626;transform:scaleX(0.8846);-webkit-text-stroke:0.25px currentColor;">3</span>
<span class="t" style="left:119.30px;top:352.01px;font-size:15.7px;color:#000;transform:scaleX(0.9810);">0</span>
<span class="t" style="left:223.30px;top:352.01px;font-size:15.7px;color:#000;transform:scaleX(0.9810);">0</span>
<span class="t" style="left:6.94px;top:375.66px;font-size:16px;color:#262626;transform:scaleX(0.8369);-webkit-text-stroke:0.25px currentColor;">4</span>
<span class="t" style="left:119.30px;top:376.01px;font-size:15.7px;color:#000;transform:scaleX(0.9810);">0</span>
<span class="t" style="left:223.30px;top:376.01px;font-size:15.7px;color:#000;transform:scaleX(0.9810);">0</span>
<span class="t" style="left:6.64px;top:399.66px;font-size:16px;color:#262626;transform:scaleX(0.8918);-webkit-text-stroke:0.25px currentColor;">5</span>
<span class="t" style="left:119.30px;top:400.01px;font-size:15.7px;color:#000;transform:scaleX(0.9810);">0</span>
<span class="t" style="left:223.30px;top:400.01px;font-size:15.7px;color:#000;transform:scaleX(0.9810);">0</span>
<span class="t" style="left:6.46px;top:423.66px;font-size:16px;color:#262626;transform:scaleX(0.9143);-webkit-text-stroke:0.25px currentColor;">6</span>
<span class="t" style="left:119.30px;top:424.01px;font-size:15.7px;color:#000;transform:scaleX(0.9810);">0</span>
<span class="t" style="left:223.30px;top:424.01px;font-size:15.7px;color:#000;transform:scaleX(0.9810);">0</span>
<span class="t" style="left:6.44px;top:447.66px;font-size:16px;color:#262626;transform:scaleX(0.9299);-webkit-text-stroke:0.25px currentColor;">7</span>
<span class="t" style="left:119.30px;top:448.01px;font-size:15.7px;color:#000;transform:scaleX(0.9810);">0</span>
<span class="t" style="left:223.30px;top:448.01px;font-size:15.7px;color:#000;transform:scaleX(0.9810);">0</span>
<span class="t" style="left:6.58px;top:471.66px;font-size:16px;color:#262626;transform:scaleX(0.8992);-webkit-text-stroke:0.25px currentColor;">8</span>
<span class="t" style="left:119.30px;top:472.01px;font-size:15.7px;color:#000;transform:scaleX(0.9810);">0</span>
<span class="t" style="left:223.30px;top:472.01px;font-size:15.7px;color:#000;transform:scaleX(0.9810);">0</span>
<span class="t" style="left:6.51px;top:495.66px;font-size:16px;color:#262626;transform:scaleX(0.9143);-webkit-text-stroke:0.25px currentColor;">9</span>
<span class="t" style="left:119.30px;top:496.01px;font-size:15.7px;color:#000;transform:scaleX(0.9810);">0</span>
<span class="t" style="left:223.30px;top:496.01px;font-size:15.7px;color:#000;transform:scaleX(0.9810);">0</span>
<span class="t" style="left:2.54px;top:519.66px;font-size:16px;color:#262626;transform:scaleX(0.8924);-webkit-text-stroke:0.25px currentColor;">10</span>
<span class="t" style="left:119.30px;top:520.01px;font-size:15.7px;color:#000;transform:scaleX(0.9810);">0</span>
<span class="t" style="left:223.30px;top:520.01px;font-size:15.7px;color:#000;transform:scaleX(0.9810);">0</span>
<span class="t" style="left:2.44px;top:543.66px;font-size:16px;color:#262626;transform:scaleX(0.9762);-webkit-text-stroke:0.25px currentColor;">11</span>
<span class="t" style="left:119.30px;top:544.01px;font-size:15.7px;color:#000;transform:scaleX(0.9810);">0</span>
<span class="t" style="left:223.30px;top:544.01px;font-size:15.7px;color:#000;transform:scaleX(0.9810);">0</span>
<span class="t" style="left:2.53px;top:567.66px;font-size:16px;color:#262626;transform:scaleX(0.9030);-webkit-text-stroke:0.25px currentColor;">12</span>
<span class="t" style="left:223.30px;top:568.01px;font-size:15.7px;color:#000;transform:scaleX(0.9810);">0</span>
<span class="t" style="left:2.54px;top:591.66px;font-size:16px;color:#262626;transform:scaleX(0.8959);-webkit-text-stroke:0.25px currentColor;">13</span>
<span class="t" style="left:223.30px;top:592.01px;font-size:15.7px;color:#000;transform:scaleX(0.9810);">0</span>
<span class="t" style="left:2.55px;top:615.66px;font-size:16px;color:#262626;transform:scaleX(0.8855);-webkit-text-stroke:0.25px currentColor;">14</span>
<span class="t" style="left:223.30px;top:616.01px;font-size:15.7px;color:#000;transform:scaleX(0.9810);">0</span>
<span class="t" style="left:2.54px;top:639.66px;font-size:16px;color:#262626;transform:scaleX(0.8959);-webkit-text-stroke:0.25px currentColor;">15</span>
<span class="t" style="left:223.30px;top:640.01px;font-size:15.7px;color:#000;transform:scaleX(0.9810);">0</span>
<span class="t" style="left:2.54px;top:663.66px;font-size:16px;color:#262626;transform:scaleX(0.8959);-webkit-text-stroke:0.25px currentColor;">16</span>
<span class="t" style="left:223.30px;top:664.01px;font-size:15.7px;color:#000;transform:scaleX(0.9810);">0</span>
<span class="t" style="left:2.53px;top:687.66px;font-size:16px;color:#262626;transform:scaleX(0.9030);-webkit-text-stroke:0.25px currentColor;">17</span>
<span class="t" style="left:223.30px;top:688.01px;font-size:15.7px;color:#000;transform:scaleX(0.9810);">0</span>
<span class="t" style="left:2.54px;top:711.66px;font-size:16px;color:#262626;transform:scaleX(0.8959);-webkit-text-stroke:0.25px currentColor;">18</span>
<span class="t" style="left:223.30px;top:712.01px;font-size:15.7px;color:#000;transform:scaleX(0.9810);">0</span>
<span class="t" style="left:2.53px;top:735.66px;font-size:16px;color:#262626;transform:scaleX(0.8995);-webkit-text-stroke:0.25px currentColor;">19</span>
<span class="t" style="left:223.30px;top:736.01px;font-size:15.7px;color:#000;transform:scaleX(0.9810);">0</span>
<span class="t" style="left:2.95px;top:759.66px;font-size:16px;color:#262626;transform:scaleX(0.8687);-webkit-text-stroke:0.25px currentColor;">20</span>
<span class="t" style="left:223.30px;top:760.01px;font-size:15.7px;color:#000;transform:scaleX(0.9810);">0</span>
<span class="t" style="left:2.94px;top:783.66px;font-size:16px;color:#262626;transform:scaleX(0.8787);-webkit-text-stroke:0.25px currentColor;">21</span>
<span class="t" style="left:223.30px;top:784.01px;font-size:15.7px;color:#000;transform:scaleX(0.9810);">0</span>
<span class="t" style="left:2.94px;top:807.66px;font-size:16px;color:#262626;transform:scaleX(0.8787);-webkit-text-stroke:0.25px currentColor;">22</span>
<span class="t" style="left:223.30px;top:808.01px;font-size:15.7px;color:#000;transform:scaleX(0.9810);">0</span>
<span class="t" style="left:2.95px;top:831.66px;font-size:16px;color:#262626;transform:scaleX(0.8720);-webkit-text-stroke:0.25px currentColor;">23</span>
<span class="t" style="left:223.30px;top:832.01px;font-size:15.7px;color:#000;transform:scaleX(0.9810);">0</span>
<span class="t" style="left:2.95px;top:855.66px;font-size:16px;color:#262626;transform:scaleX(0.8622);-webkit-text-stroke:0.25px currentColor;">24</span>
<span class="t" style="left:223.30px;top:856.01px;font-size:15.7px;color:#000;transform:scaleX(0.9810);">0</span>
<div style="left:26px;top:297px;width:107px;height:27px;box-sizing:border-box;border:2px solid #217346"></div>
<div style="left:128px;top:319px;width:7px;height:7px;background:#fff;"></div>
<div style="left:129px;top:320px;width:5px;height:5px;background:#217346;"></div>
<svg style="left:8px;top:279px;" width="16" height="16" viewBox="0 0 16 16"><path d="M16 0V16H0Z" fill="#b7b7b7"/></svg>
<div style="left:0px;top:866px;width:1094px;height:28px;background:#e6e6e6;"></div>
<div style="left:0px;top:894px;width:1094px;height:1px;background:#c6c6c6;"></div>
<div style="left:0px;top:895px;width:1094px;height:18px;background:#f3f3f3;"></div>
<div style="left:96px;top:865px;width:51px;height:25px;background:#fff;box-sizing:border-box;border-left:1px solid #ababab;border-right:1px solid #ababab"></div>
<div style="left:96px;top:889px;width:51px;height:2px;background:#217346;"></div>
<span class="t" style="left:109.65px;top:867.79px;font-size:17.5px;color:#217346;transform:scaleX(0.9166);font-weight:700;">foo</span>
<span class="t" style="left:0.60px;top:900.20px;font-size:15px;color:#444;transform:scaleX(0.8108);">Listo</span>
<span class="t" style="left:1044.92px;top:899.60px;font-size:15px;color:#5a5a5a;transform:scaleX(0.7892);">100%</span>
<svg style="left:19px;top:12px" width="19" height="18" viewBox="19 12 19 18"><rect x="20.7" y="13.6" width="14.8" height="14.5" rx="1" fill="none" stroke="#fff" stroke-width="1.8"/><rect x="20.7" y="21.6" width="14.8" height="1.3" fill="#fff"/><path d="M24 22.5H33.6V28.4H24Z" fill="#fff"/><rect x="25.8" y="24.6" width="2.5" height="3.8" fill="#217346"/></svg>
<svg style="left:55px;top:12px" width="21" height="18" viewBox="55 12 21 18"><path d="M57.4 18.8H68.2Q73.2 18.8 73.2 23.2Q73.2 27.6 67.6 28" fill="none" stroke="#5b9a79" stroke-width="2.4"/><path d="M62 14.4L57.4 18.8L62 23.2" fill="none" stroke="#5b9a79" stroke-width="2.4"/></svg>
<svg style="left:81px;top:18px" width="9" height="6" viewBox="81 18 9 6"><path d="M82 18.8H88.4L85.2 22.4Z" fill="#5b9a79"/></svg>
<svg style="left:99px;top:12px" width="21" height="18" viewBox="99 12 21 18"><path d="M116.8 18.8H106Q101 18.8 101 23.2Q101 27.6 106.6 28" fill="none" stroke="#5b9a79" stroke-width="2.4"/><path d="M112.2 14.4L116.8 18.8L112.2 23.2" fill="none" stroke="#5b9a79" stroke-width="2.4"/></svg>
<svg style="left:125px;top:18px" width="9" height="6" viewBox="125 18 9 6"><path d="M126.2 18.8H132.6L129.4 22.4Z" fill="#5b9a79"/></svg>
<svg style="left:147px;top:17px" width="9" height="10" viewBox="147 17 9 10"><rect x="148.6" y="18.6" width="5.6" height="1.2" fill="#fff"/><path d="M148.4 21.6H154.4L151.4 25.2Z" fill="#fff"/></svg>
<svg style="left:887px;top:13px" width="19" height="16" viewBox="887 13 19 16"><rect x="889.5" y="15.8" width="14" height="10.4" fill="none" stroke="#fff" stroke-width="1"/><path d="M889.5 18.5H903.5" stroke="#fff" stroke-width="1"/><path d="M896.5 25.2V20.2M893.8 22.6L896.5 19.9L899.2 22.6" fill="none" stroke="#fff" stroke-width="1"/></svg>
<div style="left:948px;top:20px;width:12px;height:1px;background:#fff;"></div>
<div style="left:1005px;top:15px;width:12px;height:12px;box-sizing:border-box;border:1px solid #fff"></div>
<svg style="left:1060px;top:13px" width="16" height="16" viewBox="1060 13 16 16"><path d="M1062.2 15.3L1074 27.1M1074 15.3L1062.2 27.1" stroke="#fff" stroke-width="1.1" fill="none"/></svg>
<svg style="left:786px;top:47px" width="16" height="22" viewBox="786 47 16 22"><path d="M791.4 62.4Q791.2 60 789.6 58.2Q788.2 56.4 788.4 54.4Q788.9 49.7 793.9 49.6Q798.9 49.7 799.5 54.4Q799.6 56.4 798.2 58.2Q796.6 60 796.5 62.4" fill="none" stroke="#fff" stroke-width="1.1"/><rect x="790.8" y="62.4" width="6.2" height="2.7" fill="#fff"/><rect x="792" y="66" width="3.9" height="1" fill="#fff"/></svg>
<svg style="left:982px;top:46px" width="21" height="23" viewBox="982 46 21 23"><ellipse cx="992.6" cy="52.6" rx="4" ry="4.6" fill="none" stroke="#fff" stroke-width="1.3"/><path d="M983.8 66.6Q984.6 58.8 990.4 57.4" fill="none" stroke="#fff" stroke-width="1.3"/><path d="M994.8 57.4Q997 57.8 998.4 59.4" fill="none" stroke="#fff" stroke-width="1.3"/><path d="M997.2 58.4V67M992.9 62.7H1001.5" stroke="#fff" stroke-width="1.3" fill="none"/></svg>
<svg style="left:5px;top:192px" width="22" height="24" viewBox="5 192 22 24"><path d="M16 193.7Q20.6 196.6 25.3 197Q25.8 210 16 214.8Q6.2 210 6.7 197Q11.4 196.6 16 193.7Z" fill="#ecc57a"/><rect x="15" y="198.2" width="2.4" height="8.6" fill="#555"/><rect x="15" y="208.4" width="2.4" height="2.4" fill="#555"/></svg>
<svg style="left:1074px;top:197px" width="12" height="12" viewBox="1074 197 12 12"><path d="M1076.6 199.4L1083.6 206.6M1083.6 199.4L1076.6 206.6" stroke="#666" stroke-width="2" fill="none"/></svg>
<div style="left:143px;top:241px;width:3px;height:3px;background:#b4b4b4;"></div>
<div style="left:143px;top:246px;width:3px;height:3px;background:#b4b4b4;"></div>
<div style="left:143px;top:251px;width:3px;height:3px;background:#b4b4b4;"></div>
<svg style="left:177px;top:240px" width="18" height="17" viewBox="177 240 18 17"><path d="M179 242L192.4 254.4M192.4 242L179 254.4" stroke="#c0c0c0" stroke-width="2" fill="none"/></svg>
<svg style="left:222px;top:240px" width="20" height="17" viewBox="222 240 20 17"><path d="M223.6 248.8L229.2 253.8L238.8 242.2" stroke="#c0c0c0" stroke-width="2.7" fill="none"/></svg>
<span class="t" style="left:267.6px;top:236px;font-family:'Liberation Serif',serif;font-style:italic;font-weight:700;font-size:20px;color:#5a5a5a">f</span>
<span class="t" style="left:274.8px;top:240.2px;font-family:'Liberation Serif',serif;font-style:italic;font-weight:700;font-size:16px;color:#5a5a5a">x</span>
<svg style="left:1074px;top:243px" width="13" height="10" viewBox="1074 243 13 10"><path d="M1076.8 245.8L1080.6 249.6L1084.4 245.8" stroke="#666" stroke-width="2.2" fill="none"/></svg>
<div style="left:1075px;top:277px;width:19px;height:589px;background:#dcdcdc;"></div>
<div style="left:1075px;top:277px;width:19px;height:19px;background:#fff;box-sizing:border-box;border:1px solid #d0d0d0"></div>
<svg style="left:1079px;top:282px" width="11" height="8" viewBox="1079 282 11 8"><path d="M1079.8 288.8H1089.2L1084.5 283.2Z" fill="#777"/></svg>
<div style="left:1075px;top:296px;width:19px;height:316px;background:#fff;box-sizing:border-box;border:1px solid #ababab"></div>
<div style="left:1075px;top:847px;width:19px;height:19px;background:#fff;box-sizing:border-box;border:1px solid #d0d0d0"></div>
<svg style="left:1079px;top:852px" width="11" height="8" viewBox="1079 852 11 8"><path d="M1079.8 853.6H1089.2L1084.5 859.2Z" fill="#777"/></svg>
<svg style="left:19px;top:874px" width="9" height="11" viewBox="19 874 9 11"><path d="M26 875.6V883.8L20.8 879.7Z" fill="#c4c4c4"/></svg>
<svg style="left:49px;top:874px" width="9" height="11" viewBox="49 874 9 11"><path d="M50.4 875.6V883.8L55.6 879.7Z" fill="#c4c4c4"/></svg>
<svg style="left:178px;top:868px" width="24" height="24" viewBox="178 868 24 24"><circle cx="189.8" cy="879.8" r="9.6" fill="none" stroke="#777" stroke-width="1.3"/><path d="M184.6 879.8H195M189.8 874.6V885" stroke="#666" stroke-width="1.5"/></svg>
<div style="left:653px;top:873px;width:3px;height:3px;background:#b4b4b4;"></div>
<div style="left:653px;top:878px;width:3px;height:3px;background:#b4b4b4;"></div>
<div style="left:653px;top:883px;width:3px;height:3px;background:#b4b4b4;"></div>
<div style="left:671px;top:870px;width:401px;height:19px;background:#d9d9d9;"></div>
<div style="left:671px;top:870px;width:19px;height:19px;background:#fff;box-sizing:border-box;border:1px solid #d0d0d0"></div>
<svg style="left:676px;top:874px" width="8" height="11" viewBox="676 874 8 11"><path d="M682.2 875V883.8L677 879.4Z" fill="#777"/></svg>
<div style="left:689px;top:870px;width:327px;height:19px;background:#fff;box-sizing:border-box;border:1px solid #ababab"></div>
<div style="left:1053px;top:870px;width:19px;height:19px;background:#fff;box-sizing:border-box;border:1px solid #d0d0d0"></div>
<svg style="left:1059px;top:874px" width="8" height="11" viewBox="1059 874 8 11"><path d="M1060 875V883.8L1065.2 879.4Z" fill="#777"/></svg>
<svg style="left:47px;top:898px" width="17" height="15" viewBox="47 898 17 15"><circle cx="51.6" cy="902.4" r="3" fill="#777"/><path d="M54.5 900.5H62.5V913H50V906" fill="none" stroke="#777" stroke-width="1"/><rect x="54.5" y="900.5" width="8" height="2.6" fill="#777"/><path d="M52.5 907.5H60.5M52.5 910.5H60.5" stroke="#777" stroke-width="1" stroke-dasharray="1.6 1.2"/></svg>
<svg style="left:758px;top:899px" width="15" height="14" viewBox="758 899 15 14"><path d="M759.5 900.5H771.5V913H759.5ZM763.5 900.5V913M767.5 900.5V913M759.5 904.5H771.5M759.5 908.5H771.5" fill="none" stroke="#666" stroke-width="1"/></svg>
<svg style="left:799px;top:899px" width="16" height="14" viewBox="799 899 16 14"><rect x="800.8" y="900.5" width="12.6" height="13" fill="none" stroke="#666" stroke-width="1"/><rect x="803.5" y="903.5" width="7" height="10" fill="none" stroke="#666" stroke-width="1"/><path d="M805 906.5H809M805 909.5H809M805 912.5H809" stroke="#666" stroke-width="1"/></svg>
<svg style="left:841px;top:899px" width="15" height="14" viewBox="841 899 15 14"><path d="M842.2 900.5H854.3V913H842.2ZM842.2 907.5H848.5V900.5" fill="none" stroke="#666" stroke-width="1"/></svg>
<div style="left:874px;top:906px;width:9px;height:2px;background:#555;"></div>
<div style="left:887px;top:907px;width:125px;height:1px;background:#a6a6a6;"></div>
<div style="left:947px;top:900px;width:5px;height:13px;background:#666;"></div>
<div style="left:1017px;top:906px;width:11px;height:2px;background:#555;"></div>
<div style="left:1021.5px;top:901.5px;width:2px;height:11px;background:#555;"></div>
</body></html>
